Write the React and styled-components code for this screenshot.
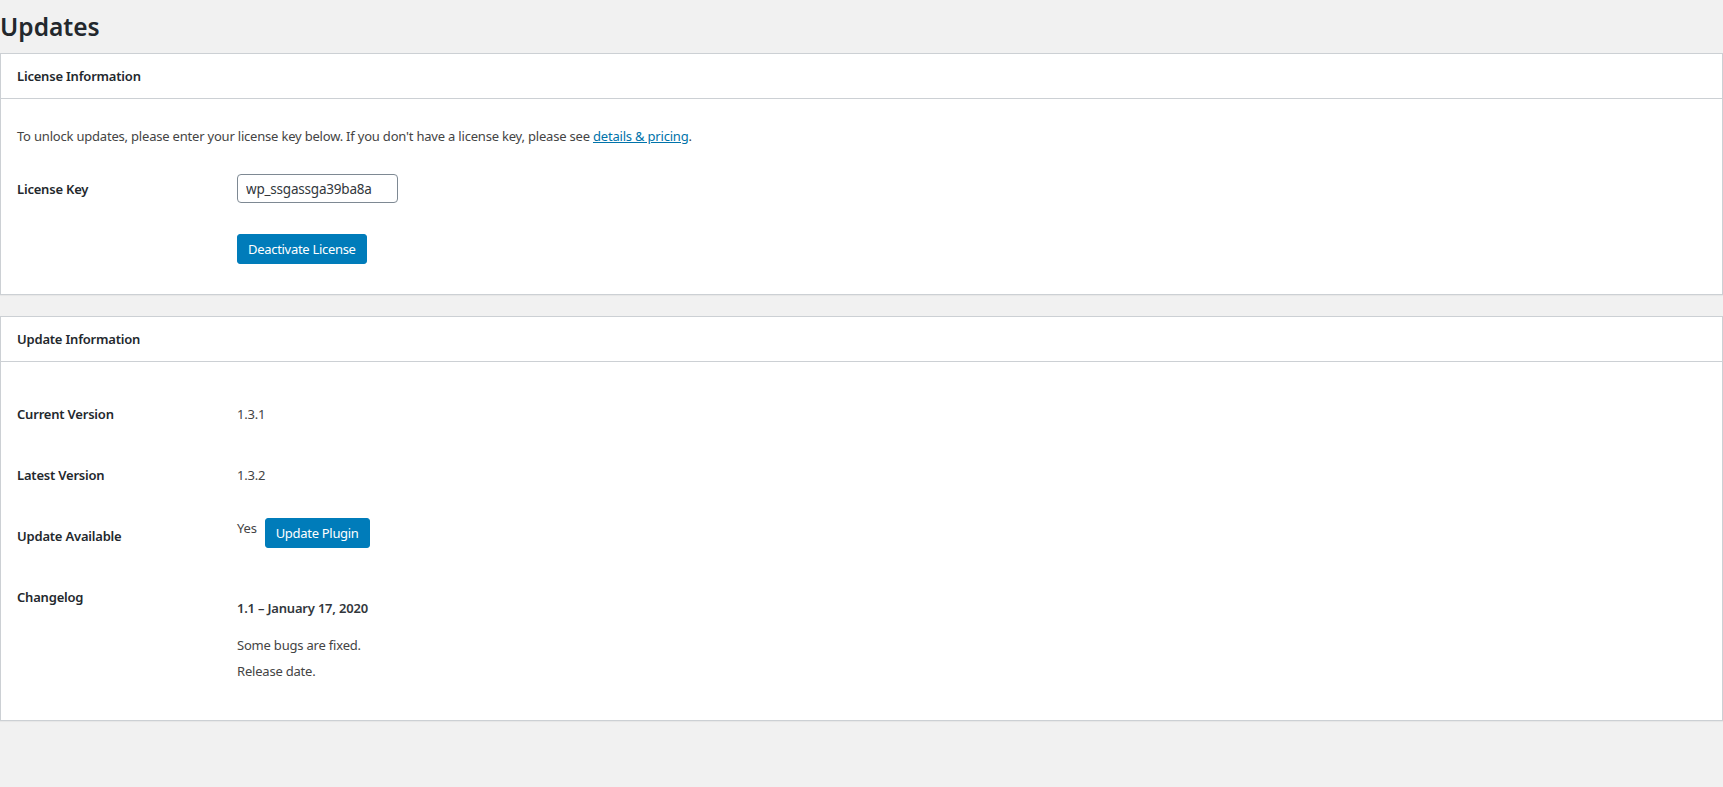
import React from 'react';
import styled, { createGlobalStyle } from 'styled-components';

const GlobalStyle = createGlobalStyle`
  html, body {
    margin: 0;
    padding: 0;
    background: #f1f1f1;
  }
  body {
    font-family: "Noto Sans", "Open Sans", sans-serif;
    font-size: 13px;
    letter-spacing: -0.2px;
    color: #444;
  }
  * {
    box-sizing: border-box;
  }
`;

const Wrap = styled.div`
  padding: 0 0 40px;
`;

const Title = styled.h1`
  margin: 0;
  padding: 10px 0 9px;
  font-size: 24.5px;
  line-height: 34px;
  font-weight: 600;
  letter-spacing: 0;
  color: #23282d;
`;

const Postbox = styled.section`
  background: #fff;
  border: 1px solid #ccd0d4;
  box-shadow: 0 1px 1px rgba(0, 0, 0, 0.04);
  margin-bottom: 21px;
`;

const PostboxHeader = styled.h2`
  margin: 0;
  height: 45px;
  display: flex;
  align-items: center;
  padding: 0 16px;
  border-bottom: 1px solid #ccd0d4;
  font-size: 13px;
  font-weight: 600;
  color: #23282d;
`;

const Inside = styled.div`
  padding: ${p => p.$pad};
`;

const Intro = styled.p`
  margin: 0;
  line-height: 19px;
  color: #444;

  a {
    color: #0073aa;
    text-decoration: underline;
  }
`;

const FieldRow = styled.div`
  display: grid;
  grid-template-columns: 220px 1fr;
  align-items: ${p => p.$align || 'start'};
  margin-top: ${p => p.$mt || 0}px;
`;

const Label = styled.div`
  font-weight: 600;
  color: #23282d;
  line-height: 19px;
  padding: ${p => p.$pad || '0'};
`;

const Value = styled.div`
  line-height: 19px;
  color: #444;
  padding: ${p => p.$pad || '0'};
`;

const KeyInput = styled.input`
  width: 161px;
  height: 29px;
  padding: 0 8px;
  border: 1px solid #7e8993;
  border-radius: 4px;
  font-family: inherit;
  font-size: 13.5px;
  letter-spacing: -0.2px;
  color: #32373c;
  background: #fff;
  outline: none;
`;

const Button = styled.button`
  height: 30px;
  margin-top: ${p => p.$mt || 0}px;
  padding: 0 10px;
  border: 1px solid #007cba;
  border-radius: 3px;
  background: #007cba;
  color: #fff;
  font-family: inherit;
  font-size: 13px;
  letter-spacing: -0.3px;
  line-height: 28px;
  cursor: pointer;
`;

const Inline = styled.div`
  display: flex;
  align-items: flex-start;
  gap: 8px;
`;

const ChangeTitle = styled.h4`
  margin: 0 0 18px;
  font-size: 13px;
  line-height: 19px;
  font-weight: 600;
  color: #32373c;
`;

const ChangeLine = styled.p`
  margin: 0 0 ${p => p.$mb || 6}px;
  line-height: 19px;
`;

const rowPad = '21px 0';

export default function App() {
  return (
    <>
      <GlobalStyle />
      <Wrap>
        <Title>Updates</Title>

        <Postbox>
          <PostboxHeader>License Information</PostboxHeader>
          <Inside $pad='28px 16px 30px'>
            <Intro>
              To unlock updates, please enter your license key below. If you don't have a license key, please see{' '}
              <a href='#'>details &amp; pricing</a>.
            </Intro>
            <FieldRow $mt={28} $align='center'>
              <Label $pad='2px 0 0'>License Key</Label>
              <div>
                <KeyInput defaultValue='wp_ssgassga39ba8a' />
              </div>
            </FieldRow>
            <FieldRow $mt={31}>
              <div />
              <div>
                <Button>Deactivate License</Button>
              </div>
            </FieldRow>
          </Inside>
        </Postbox>

        <Postbox>
          <PostboxHeader>Update Information</PostboxHeader>
          <Inside $pad='22px 16px 33px'>
            <FieldRow>
              <Label $pad={rowPad}>Current Version</Label>
              <Value $pad={rowPad}>1.3.1</Value>
            </FieldRow>
            <FieldRow>
              <Label $pad={rowPad}>Latest Version</Label>
              <Value $pad={rowPad}>1.3.2</Value>
            </FieldRow>
            <FieldRow>
              <Label $pad={rowPad}>Update Available</Label>
              <Value $pad='13px 0 0'>
                <Inline>
                  <span>Yes</span>
                  <Button $mt={-1}>Update Plugin</Button>
                </Inline>
              </Value>
            </FieldRow>
            <FieldRow>
              <Label $pad={rowPad}>Changelog</Label>
              <Value $pad='32px 0 0'>
                <ChangeTitle>1.1 – January 17, 2020</ChangeTitle>
                <ChangeLine $mb={7}>Some bugs are fixed.</ChangeLine>
                <ChangeLine>Release date.</ChangeLine>
              </Value>
            </FieldRow>
          </Inside>
        </Postbox>
      </Wrap>
    </>
  );
}
